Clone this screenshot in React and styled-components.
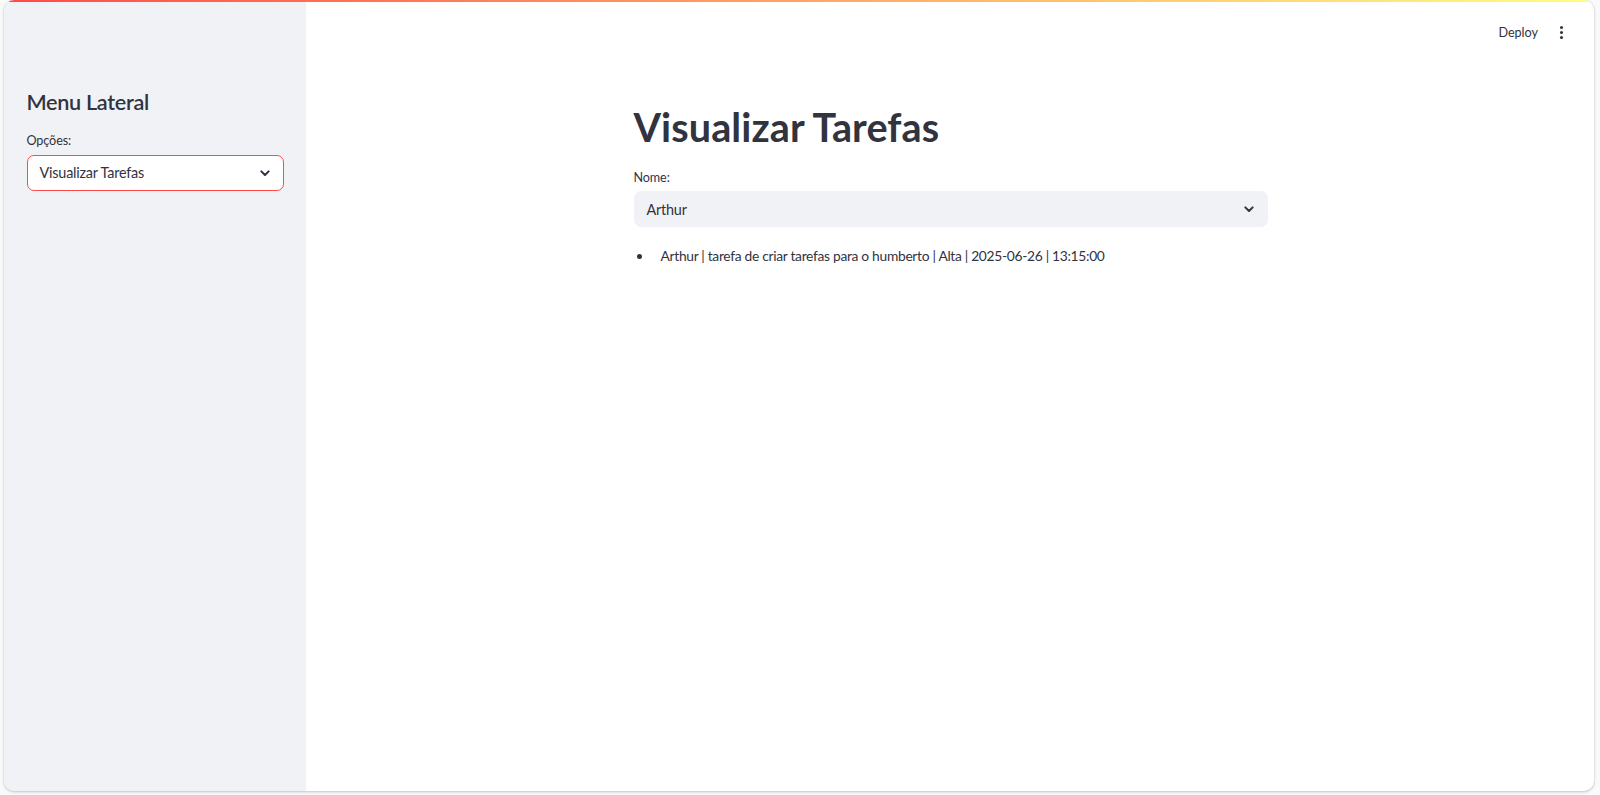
import React from 'react';
import styled, { createGlobalStyle } from 'styled-components';

const GlobalStyle = createGlobalStyle`
  html, body {
    margin: 0;
    padding: 0;
    background: #fafafa;
  }
  body {
    font-family: Lato, "Noto Sans", sans-serif;
    color: #31333f;
  }
`;

const Page = styled.div`
  height: 795px;
  padding: 0 6px 4px 4px;
  box-sizing: border-box;
`;

const Frame = styled.div`
  height: 791px;
  display: flex;
  flex-direction: column;
  background: #ffffff;
  border-radius: 10px;
  overflow: hidden;
  box-shadow: 0 1px 3px rgba(0, 0, 0, 0.22), 0 0 1px rgba(0, 0, 0, 0.15);
`;

const Decoration = styled.div`
  height: 2px;
  flex: none;
  background: linear-gradient(90deg, rgb(255, 75, 75), rgb(255, 253, 128));
`;

const Body = styled.div`
  flex: 1;
  display: flex;
  min-height: 0;
`;

const Sidebar = styled.aside`
  width: 302px;
  flex: none;
  background: #f0f2f6;
  padding: 88px 21.6px 0 22.5px;
  box-sizing: border-box;
`;

const SideTitle = styled.h2`
  margin: 0 0 16px;
  font-size: 21.6px;
  font-weight: 600;
  line-height: 1.2;
  letter-spacing: -0.3px;
`;

const Label = styled.div`
  font-size: 12.6px;
  line-height: 1.4;
  margin-bottom: 5px;
  letter-spacing: -0.1px;
`;

const Select = styled.div`
  height: 36px;
  box-sizing: border-box;
  display: flex;
  align-items: center;
  justify-content: space-between;
  padding: 0 10px 0 12px;
  border-radius: 7px;
  font-size: 14.4px;
  letter-spacing: -0.2px;
  background: ${p => (p.$focused ? '#ffffff' : '#f0f2f6')};
  border: 1px solid ${p => (p.$focused ? '#ff4b4b' : '#f0f2f6')};
`;

const Main = styled.main`
  flex: 1;
  display: flex;
  flex-direction: column;
`;

const Header = styled.header`
  height: 60px;
  display: flex;
  align-items: center;
  justify-content: flex-end;
  gap: 22px;
  padding: 0 31px 0 0;
`;

const HeaderButton = styled.span`
  font-size: 12.6px;
  color: #31333f;
`;

const Kebab = styled.span`
  display: flex;
  flex-direction: column;
  gap: 2px;
  span {
    width: 3px;
    height: 3px;
    border-radius: 50%;
    background: #31333f;
  }
`;

const Content = styled.div`
  width: 634px;
  margin: 0 auto;
  padding: 41px 0 0 1px;
`;

const Title = styled.h1`
  margin: 0 0 18px;
  font-size: 39.6px;
  font-weight: 700;
  line-height: 1.2;
  letter-spacing: 0.1px;
`;

const List = styled.ul`
  margin: 18px 0 0;
  padding: 0;
  list-style: none;
  font-size: 13.8px;
  line-height: 1.6;
  letter-spacing: -0.3px;
`;

const Item = styled.li`
  display: flex;
  align-items: center;
  &::before {
    content: '';
    width: 5px;
    height: 5px;
    border-radius: 50%;
    background: #31333f;
    margin: 0 19px 0 3px;
    flex: none;
  }
`;

const Chevron = () => (
  <svg width="16" height="16" viewBox="0 0 24 24" fill="none" stroke="#31333f" strokeWidth="3" strokeLinecap="round" strokeLinejoin="round">
    <path d="M6.5 9.5l5.5 5.5 5.5-5.5" />
  </svg>
);

export default function App() {
  return (
    <Page>
      <GlobalStyle />
      <Frame>
        <Decoration />
        <Body>
          <Sidebar>
            <SideTitle>Menu Lateral</SideTitle>
            <Label>Opções:</Label>
            <Select $focused>
              <span>Visualizar Tarefas</span>
              <Chevron />
            </Select>
          </Sidebar>
          <Main>
            <Header>
              <HeaderButton>Deploy</HeaderButton>
              <Kebab><span /><span /><span /></Kebab>
            </Header>
            <Content>
              <Title>Visualizar Tarefas</Title>
              <Label>Nome:</Label>
              <Select>
                <span>Arthur</span>
                <Chevron />
              </Select>
              <List>
                <Item>Arthur | tarefa de criar tarefas para o humberto | Alta | 2025-06-26 | 13:15:00</Item>
              </List>
            </Content>
          </Main>
        </Body>
      </Frame>
    </Page>
  );
}
